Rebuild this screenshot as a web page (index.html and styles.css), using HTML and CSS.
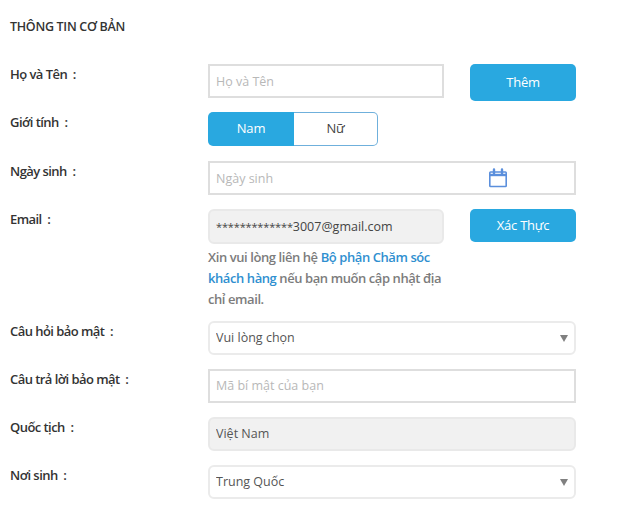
FILE: index.html
```html
<!DOCTYPE html>
<html lang="vi">
<head>
    <meta charset="UTF-8">
    <meta name="viewport" content="width=device-width, initial-scale=1.0">
    <title>Thông tin cơ bản</title>
    <link rel="stylesheet" href="styles.css">
</head>
<body>
    <h2 class="section-title">THÔNG TIN CƠ BẢN</h2>

    <form class="info-form">
        <div class="row">
            <label class="row-label">Họ và Tên&nbsp; :</label>
            <div class="row-fields">
                <input class="field field-short field-upper" type="text" placeholder="Họ và Tên">
                <button class="btn btn-add" type="button">Thêm</button>
            </div>
        </div>

        <div class="row row-gender">
            <label class="row-label">Giới tính&nbsp; :</label>
            <div class="row-fields">
                <div class="toggle">
                    <button class="toggle-item active" type="button">Nam</button>
                    <button class="toggle-item" type="button">Nữ</button>
                </div>
            </div>
        </div>

        <div class="row">
            <label class="row-label">Ngày sinh&nbsp; :</label>
            <div class="row-fields">
                <div class="date-wrap">
                    <input class="field field-full field-upper" type="text" placeholder="Ngày sinh">
                    <svg class="date-icon" width="20" height="20" viewBox="0 0 20 20" fill="none" stroke="#5b8fdc" stroke-width="1.6">
                        <rect x="1.8" y="4" width="16.4" height="14.5" rx="0.8"/>
                        <path d="M1.8 7h16.4" stroke-width="2.4"/>
                        <path d="M6 1.5v4M14 1.5v4" stroke-width="2.4" stroke-linecap="round"/>
                    </svg>
                </div>
            </div>
        </div>

        <div class="row row-email">
            <label class="row-label">Email&nbsp; :</label>
            <div class="row-fields">
                <div class="email-col">
                    <div class="field field-short field-locked field-email"><span class="email-mask">*************</span>3007@gmail.com</div>
                    <p class="help-text">Xin vui lòng liên hệ <a href="#">Bộ phận Chăm sóc khách hàng</a> nếu bạn muốn cập nhật địa chỉ email.</p>
                </div>
                <button class="btn btn-verify" type="button">Xác Thực</button>
            </div>
        </div>

        <div class="row">
            <label class="row-label">Câu hỏi bảo mật&nbsp; :</label>
            <div class="row-fields">
                <div class="select-wrap">
                    <select class="field field-full field-select">
                        <option>Vui lòng chọn</option>
                    </select>
                </div>
            </div>
        </div>

        <div class="row">
            <label class="row-label">Câu trả lời bảo mật&nbsp; :</label>
            <div class="row-fields">
                <input class="field field-full" type="text" placeholder="Mã bí mật của bạn">
            </div>
        </div>

        <div class="row">
            <label class="row-label">Quốc tịch&nbsp; :</label>
            <div class="row-fields">
                <input class="field field-full field-locked" type="text" value="Việt Nam" readonly>
            </div>
        </div>

        <div class="row">
            <label class="row-label">Nơi sinh&nbsp; :</label>
            <div class="row-fields">
                <div class="select-wrap">
                    <select class="field field-full field-select">
                        <option>Trung Quốc</option>
                    </select>
                </div>
            </div>
        </div>
    </form>
</body>
</html>
```

FILE: styles.css
```css
* {
    box-sizing: border-box;
    margin: 0;
    padding: 0;
}

body {
    font-family: "Open Sans", "Noto Sans", sans-serif;
    font-size: 13px;
    color: #333;
    background: #ffffff;
    padding: 18px 0 0 10px;
}

.section-title {
    font-size: 12.5px;
    font-weight: 600;
    line-height: 18px;
    letter-spacing: -0.3px;
    color: #333;
    margin-bottom: 28px;
}

/* Rows */
.row {
    display: grid;
    grid-template-columns: 198px 368px;
    height: 48px;
}

.row-gender {
    height: 49px;
}

.row-email {
    height: 112px;
}

.row-label {
    font-size: 13px;
    font-weight: 600;
    line-height: 16px;
    letter-spacing: -0.55px;
    padding-top: 2px;
    color: #333;
}

.row-fields {
    display: flex;
    align-items: flex-start;
    gap: 26px;
}

/* Fields */
.field {
    height: 34px;
    padding: 0 6px 2px;
    border: 2px solid #dedede;
    background: #ffffff;
    font-family: inherit;
    font-size: 12.5px;
    color: #555;
    outline: none;
}

.field::placeholder {
    color: #b8b8b8;
    opacity: 1;
}

.field-upper {
    padding-bottom: 0;
}

.field-short {
    width: 236px;
}

.field-full {
    width: 368px;
    display: block;
}

.field-locked {
    background: #f1f1f1;
    border-color: #e9e9e9;
    border-radius: 6px;
}

.field-email {
    height: 35px;
    padding-bottom: 0;
    display: flex;
    align-items: center;
    color: #444;
}

.email-mask {
    font-size: 11px;
    letter-spacing: -0.15px;
}

.field-select {
    appearance: none;
    border-color: #ebebeb;
    border-radius: 6px;
}

.select-wrap,
.date-wrap {
    position: relative;
    width: 368px;
}

.select-wrap::after {
    content: "";
    position: absolute;
    right: 8px;
    top: 14px;
    border-left: 4px solid transparent;
    border-right: 4px solid transparent;
    border-top: 7px solid #808080;
}

.date-icon {
    position: absolute;
    left: 280px;
    top: 7px;
}

/* Buttons */
.btn {
    width: 106px;
    padding-bottom: 2px;
    border: none;
    border-radius: 5px;
    background: #29a8e0;
    color: #ffffff;
    font-family: inherit;
    font-size: 13px;
    font-weight: 500;
    letter-spacing: -0.25px;
    cursor: pointer;
}

.btn-add {
    height: 37px;
}

.btn-verify {
    height: 33px;
}

/* Gender toggle */
.toggle {
    display: flex;
}

.toggle-item {
    width: 84px;
    height: 34px;
    padding-bottom: 2px;
    border: 1px solid #6fb0dc;
    border-left: none;
    border-radius: 0 5px 5px 0;
    background: #ffffff;
    color: #444;
    font-family: inherit;
    font-size: 13px;
    font-weight: 500;
    letter-spacing: -0.2px;
    cursor: pointer;
}

.toggle-item.active {
    width: 86px;
    border: none;
    border-radius: 5px 0 0 5px;
    background: #29a8e0;
    color: #ffffff;
}

/* Email help */
.help-text {
    width: 236px;
    margin-top: 3px;
    font-size: 13px;
    font-weight: 600;
    line-height: 21px;
    letter-spacing: -0.42px;
    color: #7c7c7c;
}

.help-text a {
    color: #2f8fd0;
    text-decoration: none;
}
```
